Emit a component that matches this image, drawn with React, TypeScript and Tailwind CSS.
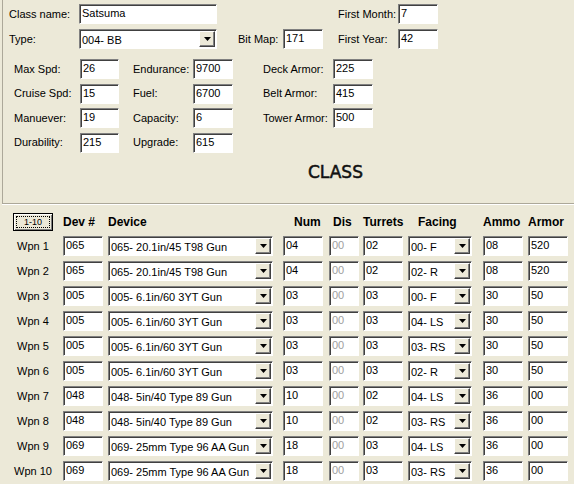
import React from "react"

const sans = "font-['Liberation_Sans',Arial,sans-serif]"

function Field({ w, value, dim }: { w: string; value: string; dim?: boolean }) {
  return (
    <div
      className={`h-[20px] ${w} shrink-0 bg-white border border-t-[#808080] border-l-[#808080] border-b-white border-r-white shadow-[inset_1px_1px_0_#404040] pl-[2px] pt-[1px] text-[11px] leading-[14px] whitespace-nowrap overflow-hidden ${dim ? "text-[#a0a0a0]" : "text-black"}`}
    >
      {value}
    </div>
  )
}

function Combo({ w, value }: { w: string; value: string }) {
  return (
    <div
      className={`h-[20px] ${w} shrink-0 bg-white border border-t-[#808080] border-l-[#808080] border-b-white border-r-white shadow-[inset_1px_1px_0_#404040] flex items-center pr-[1px]`}
    >
      <span className="flex-1 pl-[2px] pt-[2px] text-[11px] leading-[14px] whitespace-nowrap overflow-hidden">{value}</span>
      <div className="w-[16px] h-[16px] shrink-0 bg-[#ECE9D8] border border-t-white border-l-white border-b-[#404040] border-r-[#404040] shadow-[inset_-1px_-1px_0_#808080] flex items-center justify-center">
        <svg width="7" height="4" viewBox="0 0 7 4">
          <polygon points="0,0 7,0 3.5,4" fill="#000" />
        </svg>
      </div>
    </div>
  )
}

const weapons = [
  ["065", "065- 20.1in/45 T98 Gun", "04", "00", "02", "00- F", "08", "520"],
  ["065", "065- 20.1in/45 T98 Gun", "04", "00", "02", "02- R", "08", "520"],
  ["005", "005- 6.1in/60 3YT Gun", "03", "00", "03", "00- F", "30", "50"],
  ["005", "005- 6.1in/60 3YT Gun", "03", "00", "03", "04- LS", "30", "50"],
  ["005", "005- 6.1in/60 3YT Gun", "03", "00", "03", "03- RS", "30", "50"],
  ["005", "005- 6.1in/60 3YT Gun", "03", "00", "03", "02- R", "30", "50"],
  ["048", "048- 5in/40 Type 89 Gun", "10", "00", "02", "04- LS", "36", "00"],
  ["048", "048- 5in/40 Type 89 Gun", "10", "00", "02", "03- RS", "36", "00"],
  ["069", "069- 25mm Type 96 AA Gun", "18", "00", "03", "04- LS", "36", "00"],
  ["069", "069- 25mm Type 96 AA Gun", "18", "00", "03", "03- RS", "36", "00"],
]

const stats = [
  ["Max Spd:", "26", "Endurance:", "9700", "Deck Armor:", "225"],
  ["Cruise Spd:", "15", "Fuel:", "6700", "Belt Armor:", "415"],
  ["Manuever:", "19", "Capacity:", "6", "Tower Armor:", "500"],
  ["Durability:", "215", "Upgrade:", "615", "", ""],
]

export default function App() {
  return (
    <div className={`w-[574px] h-[484px] bg-[#ECE9D8] text-black text-[11px] overflow-hidden ${sans}`}>
      {/* class panel */}
      <div className="h-[204px] ml-[2px] border-l border-b border-[#aca899] shadow-[0_1px_0_#ffffff] flex flex-col">
        <div className="mt-[4px] h-[20px] flex items-center">
          <span className="ml-[6px] w-[70px]">Class name:</span>
          <Field w="w-[138px]" value="Satsuma" />
          <span className="ml-[121px] w-[60px]">First Month:</span>
          <Field w="w-[40px]" value="7" />
        </div>
        <div className="mt-[5px] h-[20px] flex items-center">
          <span className="ml-[6px] w-[70px]">Type:</span>
          <Combo w="w-[138px]" value="004- BB" />
          <span className="ml-[21px] w-[45px]">Bit Map:</span>
          <Field w="w-[40px]" value="171" />
          <span className="ml-[15px] w-[60px]">First Year:</span>
          <Field w="w-[40px]" value="42" />
        </div>
        <div className="mt-[10px] flex flex-col gap-[4.5px]">
          {stats.map((s, i) => (
            <div key={i} className="h-[20px] flex items-center">
              <span className="ml-[11px] w-[66px]">{s[0]}</span>
              <Field w="w-[39px]" value={s[1]} />
              <span className="ml-[14px] w-[60px]">{s[2]}</span>
              <Field w="w-[40px]" value={s[3]} />
              {s[4] && (
                <>
                  <span className="ml-[30px] w-[70px]">{s[4]}</span>
                  <Field w="w-[40px]" value={s[5]} />
                </>
              )}
            </div>
          ))}
        </div>
        <div className="mt-[9.5px] ml-[305px] h-[20px] text-[17px] leading-[20px] text-[#111] [-webkit-text-stroke:0.5px_#111] font-['DejaVu_Sans',Verdana,sans-serif]">
          CLASS
        </div>
      </div>

      {/* weapons grid */}
      <div className="mt-[9px] h-[18px] flex items-center font-bold text-[12px] whitespace-nowrap">
        <button className="ml-[13px] w-[40px] h-[18px] bg-[#ECE9D8] border border-black shadow-[inset_1px_1px_0_#ffffff,inset_-1px_-1px_0_#808080] flex items-center justify-center p-[2px]">
          <span className="w-full h-full border border-dotted border-black flex items-center justify-center text-[9px] leading-[9px] font-normal">
            1-10
          </span>
        </button>
        <span className="ml-[10px] w-[40px]">Dev #</span>
        <span className="ml-[5px] w-[165px]">Device</span>
        <span className="ml-[10px] w-[40px] pl-[11px]">Num</span>
        <span className="ml-[6px] w-[30px] pl-[4px]">Dis</span>
        <span className="ml-[4px] w-[40px]">Turrets</span>
        <span className="ml-[5px] w-[64px] pl-[10px]">Facing</span>
        <span className="ml-[11px] w-[40px]">Ammo</span>
        <span className="ml-[5px] w-[40px]">Armor</span>
      </div>
      <div className="mt-[5px] flex flex-col gap-[5px]">
        {weapons.map((r, i) => (
          <div key={i} className="h-[20px] flex items-center">
            <span className="ml-[13px] w-[40px] text-center whitespace-nowrap">Wpn {i + 1}</span>
            <div className="ml-[10px]"><Field w="w-[40px]" value={r[0]} /></div>
            <div className="ml-[5px]"><Combo w="w-[165px]" value={r[1]} /></div>
            <div className="ml-[10px]"><Field w="w-[40px]" value={r[2]} /></div>
            <div className="ml-[6px]"><Field w="w-[30px]" value={r[3]} dim /></div>
            <div className="ml-[4px]"><Field w="w-[40px]" value={r[4]} /></div>
            <div className="ml-[5px]"><Combo w="w-[64px]" value={r[5]} /></div>
            <div className="ml-[11px]"><Field w="w-[40px]" value={r[6]} /></div>
            <div className="ml-[5px]"><Field w="w-[40px]" value={r[7]} /></div>
          </div>
        ))}
      </div>
    </div>
  )
}
